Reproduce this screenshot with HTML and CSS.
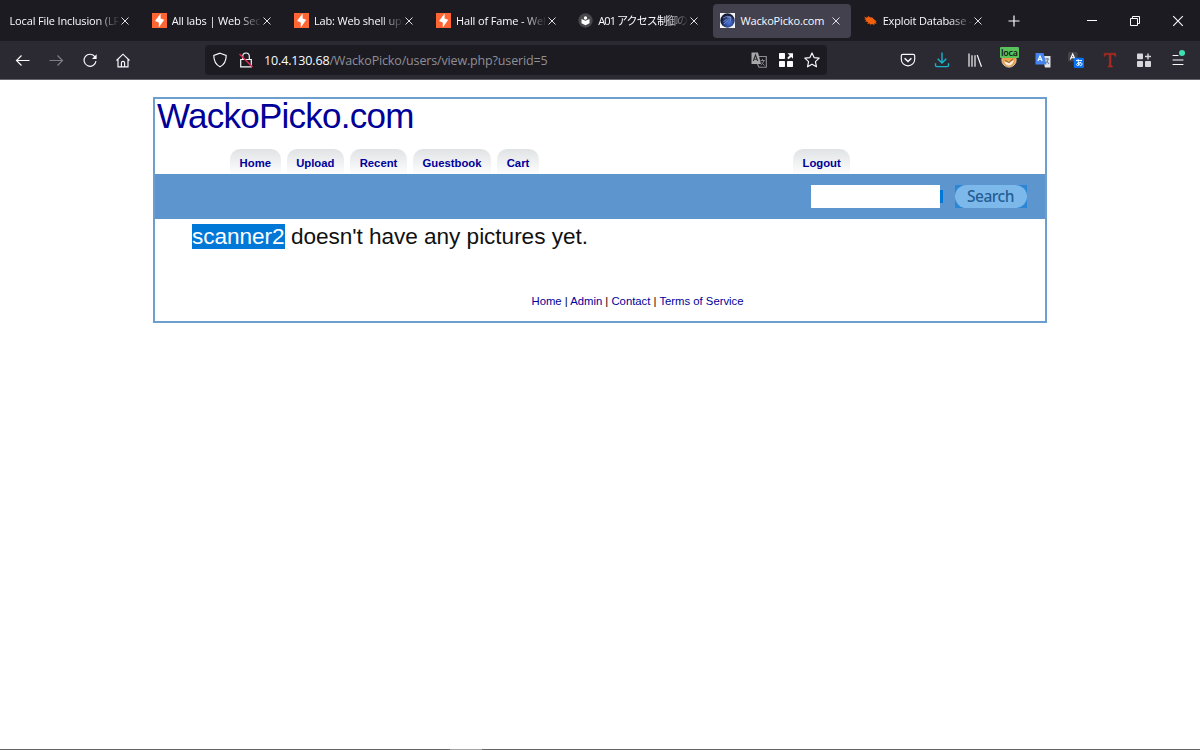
FILE: index.html
```html
<!DOCTYPE html>
<html lang="en">

<head>
  <meta charset="UTF-8" />
  <title>WackoPicko.com</title>
  <link rel="stylesheet" href="styles.css">
</head>

<body>
  <svg width="0" height="0" class="defs">
    <symbol id="close" viewBox="0 0 10 10"><path d="M1.5 1.5l7 7m0-7l-7 7" stroke="#e0e0e6" stroke-width="1" fill="none" /></symbol>
    <symbol id="burp" viewBox="0 0 15 15">
      <rect width="15" height="15" fill="#ff6633" />
      <path d="M8.6.5v5l3.6 1.300L6.800 14.500V9.600L3 8.100z" fill="#fff" />
    </symbol>
  </svg>

  <div class="tabs">
    <div class="tab">
      <span class="tab-title">Local File Inclusion (LF</span>
      <svg class="close"><use href="#close" /></svg>
    </div>
    <div class="tab">
      <svg class="favicon"><use href="#burp" /></svg>
      <span class="tab-title">All labs | Web Secu</span>
      <svg class="close"><use href="#close" /></svg>
    </div>
    <div class="tab">
      <svg class="favicon"><use href="#burp" /></svg>
      <span class="tab-title">Lab: Web shell upl</span>
      <svg class="close"><use href="#close" /></svg>
    </div>
    <div class="tab">
      <svg class="favicon"><use href="#burp" /></svg>
      <span class="tab-title">Hall of Fame - Wel</span>
      <svg class="close"><use href="#close" /></svg>
    </div>
    <div class="tab">
      <svg class="favicon" viewBox="0 0 15 15">
        <circle cx="7.5" cy="7.5" r="7.2" fill="#48474b" />
        <path d="M3.500 6l4 1.800L11.500 6v4.300l-4 2-4-2z" fill="#fff" />
        <circle cx="7.5" cy="5" r="1.700" fill="#fff" />
      </svg>
      <span class="tab-title jp">A01 アクセス制御の</span>
      <svg class="close"><use href="#close" /></svg>
    </div>
    <div class="tab active">
      <svg class="favicon" viewBox="0 0 15 15">
        <defs>
          <radialGradient id="ball" cx=".6" cy=".65">
            <stop offset="0" stop-color="#4f78dc" />
            <stop offset=".65" stop-color="#2d478f" />
            <stop offset="1" stop-color="#141c38" />
          </radialGradient>
        </defs>
        <rect width="15" height="15" fill="#f4f4f4" />
        <circle cx="7.5" cy="7.5" r="7.2" fill="url(#ball)" />
        <path d="M3 5q4-3 8-1M4 11l6.500-6M7 4.800l4-.3-.8 4M3.500 8.500l3-2" fill="none" stroke="#91a6df" stroke-width=".7" />
      </svg>
      <span class="tab-title">WackoPicko.com</span>
      <svg class="close"><use href="#close" /></svg>
    </div>
    <div class="tab">
      <svg class="favicon" viewBox="0 0 15 15">
        <path d="M1 3.500l3 1.200L5.500 3l1.200 1.300 2.600.2 1.800 1.900 2.700 2.200-1.500.2 1.400 2-2.600-.2.300 1.600-2.200-1.200-2 .8-.4-1.400-2.700.6 1.300-1.700L2 8.300l1.400-1.100L1.200 6l1.500-.5z" fill="#f2600c" />
      </svg>
      <span class="tab-title">Exploit Database -</span>
      <svg class="close"><use href="#close" /></svg>
    </div>
    <svg class="new-tab" viewBox="0 0 12 12"><path d="M6 .5v11M.5 6h11" stroke="#fbfbfe" stroke-width="1.200" /></svg>
    <div class="window-buttons">
      <svg viewBox="0 0 12 12"><path d="M1 5.500h10" stroke="#fbfbfe" /></svg>
      <svg viewBox="0 0 12 12" fill="none" stroke="#fbfbfe"><path d="M1.500 3.500h7v7h-7zM3.500 3.500v-2h7v7h-2" /></svg>
      <svg viewBox="0 0 12 12"><path d="M1.200 1.200l9.600 9.600m0-9.600l-9.600 9.600" stroke="#fbfbfe" stroke-width="1.100" /></svg>
    </div>
  </div>

  <div class="toolbar">
    <div class="nav-buttons">
      <svg viewBox="0 0 16 16"><path d="M14.500 8.500h-13M6.500 3.500l-5 5 5 5" /></svg>
      <svg viewBox="0 0 16 16" class="disabled"><path d="M1.500 8.500h13M9.500 3.500l5 5-5 5" /></svg>
      <svg viewBox="0 0 16 16"><path d="M13 4.900A6 6 0 1 0 14 9" /><path d="M14.600 2.300v4.600H10z" fill="#fbfbfe" stroke="none" /></svg>
      <svg viewBox="0 0 16 16"><path d="M1.500 8.500L8 2.200l6.500 6.300M3 7.500v7.300h10V7.500M6.400 14.500v-3.600a1.600 1.600 0 0 1 3.200 0v3.600" /></svg>
    </div>
    <div class="urlbar">
      <svg viewBox="0 0 16 16"><path d="M8 1.200L14.200 3.400c0 5.200-1.700 9-6.200 11.400C3.500 12.400 1.800 8.600 1.800 3.400z" /></svg>
      <svg viewBox="0 0 16 16"><path d="M4.700 7.500V4.300a3.300 3.300 0 0 1 6.600 0v3.200M2.700 7.500h10.600v7.300H2.700z" /><path d="M1.500 2l13 13" stroke="#e22850" stroke-width="1.500" /></svg>
      <span class="url"><b>10.4.130.68</b>/WackoPicko/users/view.php?userid=5</span>
      <div class="url-icons">
        <svg viewBox="0 0 16 16">
          <path d="M7 4.500h8.300v10.700H8L6.500 12" stroke="#8d8d91" />
          <path d="M.5.500H7l3 11.500H.5z" fill="#a8a8ab" stroke="none" />
          <path d="M2.300 9L4.500 3l2.200 6M3 7.200h3" stroke="#333238" />
          <path d="M9.500 8.500h4.300M11.500 7v1.500M13 8.500q-.8 3-3.200 4.500M10.500 10.500l3 3" stroke="#8d8d91" stroke-width=".9" />
        </svg>
        <svg viewBox="0 0 16 16" class="solid"><rect x="1" y="1" width="6" height="6" rx=".7" /><rect x="1" y="9" width="6" height="6" rx=".7" /><rect x="9" y="9" width="6" height="6" rx=".7" /><path d="M9.500 1.200H15v5.600l-1.800-1.900-2.700 2.400-1.300-1.400 2.500-2.700z" /></svg>
        <svg viewBox="0 0 16 16"><path d="M8 .9l2.100 4.700 5.100.5-3.800 3.500 1.100 5.200L8 12.200l-4.500 2.600 1.100-5.200L.8 6.100l5.100-.5z" stroke-linejoin="round" /></svg>
      </div>
    </div>
    <div class="extensions">
      <svg viewBox="0 0 16 16"><path d="M2.800 2.300h10.400q1.500 0 1.500 1.500v3.400a6.700 6.700 0 0 1-13.400 0V3.800q0-1.500 1.500-1.500z" /><path d="M4.600 6.200L8 9.500l3.400-3.300" stroke-width="1.500" /></svg>
      <svg viewBox="0 0 16 16"><path d="M8 .5v10.300M3.700 6.700L8 11l4.300-4.300M1.500 11.300v2q0 1.300 1.300 1.300h10.400q1.300 0 1.300-1.300v-2" stroke="#18b4cc" stroke-width="1.400" /></svg>
      <svg viewBox="0 0 16 16"><path d="M2 1.500v13.300M5 3.200v11.600M8 3.200v11.600M10.200 3l4.300 11.800" /></svg>
      <div class="cookie">
        <svg viewBox="0 0 16 16">
          <circle cx="8" cy="8" r="7.200" fill="#ef9c47" stroke="#d9d4cc" stroke-width=".8" />
          <path d="M3 9q4 2.500 5-.5 1 2 5-.5-1.500 5.500-5 5.500T3 9z" fill="#fff1dc" stroke="none" />
          <path d="M4 8.500l4 2 4-3.500" stroke="#9c6a35" />
        </svg>
        <span>loca</span>
      </div>
      <svg viewBox="0 0 16 16">
        <path d="M7 4h8.500v11.500H10z" fill="#e1e4e8" stroke="none" />
        <path d="M.5 1h8l3 11.500H.5z" fill="#4484ef" stroke="none" />
        <path d="M2.800 9L5 4l2.200 5M3.500 7.500h3" stroke="#fff" />
        <path d="M9.500 7h4.500M12 6v1M13.200 7q-.5 3-2.700 4M11.500 9l2.500 3" stroke="#6b7f9e" />
      </svg>
      <svg viewBox="0 0 16 16">
        <rect width="9.500" height="9.500" rx="1.500" fill="#444347" stroke="none" />
        <path d="M2.300 7.500L4.700 2l2.400 5.500M3.300 5.700h3" stroke="#fff" />
        <rect x="5.800" y="5.800" width="10.200" height="10.200" rx="1.500" fill="#0972f2" stroke="none" />
        <path d="M8 8.500h6M10.200 7.100q-.2 4.500.8 6.600M13 9.800q-1.700 4-3.700 3.800-1.800-1 .7-2.600 3.500-1.500 4.100.8.200 1.700-2 2" stroke="#fff" stroke-width=".9" />
      </svg>
      <svg viewBox="0 0 16 16"><path d="M2 4.500l.4-3.300h11.400v3.300h-.7q-.5-2.200-3-2H9v10q0 1.600 1.500 1.800v.8H6v-.8q1.300-.3 1.300-1.800v-10h-2q-2.300-.1-2.800 2z" fill="#a92c20" stroke="#a92c20" stroke-width=".5" /></svg>
      <svg viewBox="0 0 16 16" class="solid grey"><rect x="1" y="1.500" width="6" height="5.700" rx=".8" /><rect x="1" y="9" width="6" height="6" rx=".8" /><rect x="9" y="9" width="6" height="6" rx=".8" /><path d="M11.300 1.500h1.400v2.300H15v1.400h-2.300v2.300h-1.400V5.200H9V3.800h2.300z" /></svg>
      <div class="menu">
        <svg viewBox="0 0 16 16"><path d="M3 3.500h5M3 8h10M3 12.500h10" stroke-linecap="round" /></svg>
        <i class="dot"></i>
      </div>
    </div>
  </div>

  <div class="page">
    <div class="title"><a>WackoPicko.com</a></div>
    <div class="menu-tabs">
      <a>Home</a>
      <a>Upload</a>
      <a>Recent</a>
      <a>Guestbook</a>
      <a>Cart</a>
      <a class="logout">Logout</a>
    </div>
    <div class="searchbar">
      <div class="query"></div>
      <i class="gap-selected"></i>
      <div class="search-bg"><div class="search-button">Search</div></div>
    </div>
    <div class="content"><span class="selected">scanner2</span> doesn't have any pictures yet.</div>
    <div class="footer"><a>Home</a> | <a>Admin</a> | <a>Contact</a> | <a>Terms of Service</a></div>
  </div>

  <div class="taskbar"><i></i></div>
</body>

</html>
```
FILE: styles.css
```css
* {
  box-sizing: border-box;
}

body {
  margin: 0;
  height: 750px;
  overflow: hidden;
  display: flex;
  flex-direction: column;
  background: #fff;
  font-family: "Liberation Sans", Arial, sans-serif;
}

svg {
  display: block;
  flex: none;
}

.defs {
  position: absolute;
}

/* tab strip */
.tabs {
  height: 41px;
  flex: none;
  display: flex;
  align-items: center;
  padding-left: 2px;
  background: #1c1b22;
  color: #fbfbfe;
  font-family: "Open Sans", "Noto Sans CJK JP", sans-serif;
  font-size: 11px;
  letter-spacing: -0.15px;
}

.tab {
  width: 138px;
  height: 34px;
  margin-right: 4.2px;
  flex: none;
  display: flex;
  align-items: center;
  padding: 0 10px 0 7.5px;
  border-radius: 4px;
}

.tab.active {
  background: #42414d;
}

.favicon {
  width: 15px;
  height: 15px;
  margin-right: 5px;
}

.tab-title {
  flex: 1;
  min-width: 0;
  white-space: nowrap;
  line-height: 20px;
  -webkit-mask-image: linear-gradient(to left, transparent, #000 24px);
  mask-image: linear-gradient(to left, transparent, #000 24px);
}

.tab-title.jp {
  letter-spacing: -0.9px;
}

.active .tab-title {
  -webkit-mask-image: none;
  mask-image: none;
}

.close {
  width: 10px;
  height: 10px;
}

.new-tab {
  width: 12px;
  height: 12px;
  margin-left: 11px;
}

.window-buttons {
  margin-left: auto;
  margin-right: 16px;
  display: flex;
  gap: 31px;
}

.window-buttons svg {
  width: 12px;
  height: 12px;
}

/* toolbar */
.toolbar {
  height: 39px;
  flex: none;
  display: flex;
  align-items: center;
  background: #2b2a33;
  border-bottom: 1px solid #66656b;
}

.toolbar svg {
  width: 16px;
  height: 16px;
  fill: none;
  stroke: #fbfbfe;
  stroke-width: 1.15;
}

.toolbar svg.solid {
  fill: #fbfbfe;
  stroke: none;
}

.toolbar svg.grey {
  fill: #d7d7dc;
}

.toolbar svg.disabled {
  opacity: 0.4;
}

.nav-buttons {
  width: 205px;
  padding-left: 14.5px;
  display: flex;
  gap: 17.6px;
}

.urlbar {
  width: 622px;
  height: 30px;
  display: flex;
  align-items: center;
  padding: 0 7px;
  gap: 10px;
  background: #1c1b22;
  border-radius: 4px;
}

.url {
  color: #8f8f95;
  font-family: "Open Sans", sans-serif;
  font-size: 12.5px;
  line-height: 18px;
  letter-spacing: -0.15px;
  padding-top: 1px;
  white-space: nowrap;
}

.url b {
  color: #fbfbfe;
  font-weight: normal;
}

.url-icons {
  margin-left: auto;
  display: flex;
  gap: 10.3px;
}

.extensions {
  margin-left: auto;
  padding-right: 14.5px;
  display: flex;
  gap: 17.7px;
}

.cookie,
.menu {
  position: relative;
}

.cookie span {
  position: absolute;
  left: -1px;
  top: -5px;
  width: 19px;
  height: 11px;
  padding-left: 1px;
  background: #5bc25b;
  color: #101010;
  border-radius: 1px;
  letter-spacing: -0.3px;
  font: 600 9px/12px "Open Sans", sans-serif;
}

.dot {
  position: absolute;
  left: 9px;
  top: -2px;
  width: 6px;
  height: 6px;
  border-radius: 50%;
  background: #3fe1b0;
}

/* site */
.page {
  width: 894px;
  height: 226px;
  margin: 16.5px 0 0 153px;
  border: 2px solid #6c9fd0;
}

.page a {
  color: #000099;
}

.title {
  height: 50px;
  padding-left: 2px;
  font-size: 35px;
  line-height: 33px;
  letter-spacing: -0.75px;
}

.menu-tabs {
  height: 25.5px;
  display: flex;
  gap: 6px;
  padding-left: 75px;
  font-size: 11.3px;
  line-height: 28px;
  font-weight: bold;
}

.menu-tabs a {
  padding: 0 9.6px;
  border-radius: 10px 10px 0 0;
  background: linear-gradient(#e0e3e5, #fdfdfd);
}

.menu-tabs .logout {
  margin-left: 248px;
}

.searchbar {
  height: 45px;
  display: flex;
  align-items: center;
  justify-content: flex-end;
  padding-right: 18.5px;
  background: #5d95cf;
}

.query {
  width: 129px;
  height: 23px;
  background: #fff;
}

.gap-selected {
  width: 3px;
  height: 13px;
  margin-right: 12px;
  background: #0078d7;
}

.search-bg {
  background: #2b86d6;
}

.search-button {
  width: 72px;
  height: 23px;
  border-radius: 12px;
  background: #7db8eb;
  color: #235e93;
  text-align: center;
  font: 500 15.5px/22px "Noto Sans", sans-serif;
  letter-spacing: -0.5px;
}

.content {
  height: 73.5px;
  padding: 4.5px 0 0 37px;
  color: #111;
  font-size: 22.6px;
  line-height: 26px;
  letter-spacing: -0.04px;
}

.selected {
  background: #0078d7;
  color: #fff;
}

.footer {
  padding-left: 75px;
  text-align: center;
  font-size: 11.3px;
  line-height: 16px;
}

.taskbar {
  height: 1px;
  margin-top: auto;
  background: #666;
}

.taskbar i {
  display: block;
  width: 32px;
  height: 1px;
  margin-left: 450px;
  background: #a5a5a5;
}
```
